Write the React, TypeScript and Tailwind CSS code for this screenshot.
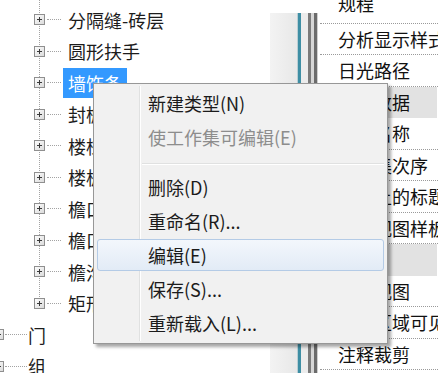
const cjk = "font-['Noto_Sans_CJK_SC','Noto_Sans',sans-serif]";

const treeItems = [
  "分隔缝-砖层",
  "圆形扶手",
  "墙饰条",
  "封檐带",
  "楼梯",
  "楼板边缘",
  "檐口",
  "檐口板",
  "檐沟",
  "矩形扶手",
];

const propRows: Array<{ label: string; header?: boolean }> = [
  { label: "规程" },
  { label: "分析显示样式" },
  { label: "日光路径" },
  { label: "标识数据", header: true },
  { label: "视图名称" },
  { label: "工作集次序" },
  { label: "图纸上的标题" },
  { label: "默认视图样板" },
  { label: "范围", header: true },
  { label: "裁剪视图" },
  { label: "裁剪区域可见" },
  { label: "注释裁剪" },
];

const menuItems: Array<{ label?: string; disabled?: boolean; hot?: boolean; sep?: boolean }> = [
  { label: "新建类型(N)" },
  { label: "使工作集可编辑(E)", disabled: true },
  { sep: true },
  { label: "删除(D)" },
  { label: "重命名(R)..." },
  { label: "编辑(E)", hot: true },
  { label: "保存(S)..." },
  { label: "重新载入(L)..." },
];

function PlusBox() {
  return (
    <svg width="11" height="11" viewBox="0 0 11 11" className="relative shrink-0">
      <defs>
        <linearGradient id="pbox" x1="0" y1="0" x2="1" y2="1">
          <stop offset="0" stopColor="#ffffff" />
          <stop offset="1" stopColor="#d9d9d9" />
        </linearGradient>
      </defs>
      <rect x="0.5" y="0.5" width="10" height="10" fill="url(#pbox)" stroke="#8f8f8f" />
      <path d="M3 5.5h5M5.5 3v5" stroke="#3a3a3a" />
    </svg>
  );
}

function Tree() {
  return (
    <div className={`relative w-[270px] shrink-0 pt-[4px] text-[18px] text-[#1c1c1c] ${cjk}`}>
      <div className="absolute left-[39px] top-0 h-[303px] border-l border-dotted border-[#a3a3a3]" />
      {treeItems.map((label, i) => (
        <div key={label} className="flex h-[31.5px] items-center">
          <div className="w-[34px] shrink-0" />
          <PlusBox />
          <div className="ml-[2px] w-[14px] shrink-0 border-t border-dotted border-[#a3a3a3]" />
          <div
            className={`ml-[2px] flex h-[30px] items-center px-[5px] leading-none whitespace-nowrap ${
              i === 2 ? "bg-[#3399ff] text-white" : ""
            }`}
          >
            {label}
          </div>
        </div>
      ))}
      {["门", "组"].map((label) => (
        <div key={label} className="flex h-[31.5px] items-center">
          <div className="ml-[-7px] shrink-0">
            <PlusBox />
          </div>
          <div className="ml-[1px] w-[22px] shrink-0 border-t border-dotted border-[#a3a3a3]" />
          <div className="ml-[1px] leading-none whitespace-nowrap">{label}</div>
        </div>
      ))}
    </div>
  );
}

function Splitter() {
  return (
    <div className="flex w-[48px] shrink-0 pt-[13px]">
      <div className="w-[27px] bg-gradient-to-r from-[#f3f3f3] to-[#e8e8e8]" />
      <div className="w-px bg-[#b9cfd5]" />
      <div className="w-[3px] bg-[#3e8ea4]" />
      <div className="w-[7px] bg-[#ececec]" />
      <div className="w-[3px] bg-[#7a7a7a]" />
      <div className="w-[3px] bg-[#d6d6d6]" />
      <div className="w-[3px] bg-[#6b6b6b]" />
      <div className="w-px bg-[#cfcfcf]" />
    </div>
  );
}

function Properties() {
  return (
    <div className={`w-[120px] shrink-0 overflow-hidden text-[18px] text-[#111] ${cjk}`}>
      <div className="mt-[-8px] flex flex-col">
        {propRows.map((row, i) =>
          row.header ? (
            <div key={row.label} className="ml-[2px] mr-px flex h-[31.5px] items-center bg-[#e2e2e2] pl-[18px] leading-none whitespace-nowrap">
              {row.label}
            </div>
          ) : (
            <div
              key={row.label}
              className="ml-[2px] flex h-[31.5px] items-center border-b border-dotted border-[#9a9a9a] pl-[18px] leading-none whitespace-nowrap"
            >
              <span className={i === 0 ? "mb-[8px]" : ""}>{row.label}</span>
            </div>
          )
        )}
      </div>
    </div>
  );
}

function ContextMenu() {
  return (
    <div
      className={`absolute left-[93px] top-[83px] h-[261px] w-[295px] border border-[#979797] bg-[#f1f1f1] px-[3px] pt-[2px] text-[18px] shadow-[3px_3px_3px_rgba(0,0,0,0.35)] ${cjk}`}
    >
      <div className="absolute bottom-[2px] left-[45px] top-[2px] w-px bg-[#e0e1e1]" />
      <div className="absolute bottom-[2px] left-[46px] top-[2px] w-px bg-white" />
      {menuItems.map((item, i) =>
        item.sep ? (
          <div key={`sep-${i}`} className="relative h-[16px] pl-[45px] pt-[9px]">
            <div className="h-px bg-[#e0e1e1]" />
            <div className="h-px bg-white" />
          </div>
        ) : (
          <div key={item.label} className="relative py-[1px]">
            <div
              className={`flex h-[32px] items-center rounded-[3px] border pl-[50px] leading-none whitespace-nowrap ${
                item.hot
                  ? "border-[#b4cbe6] bg-gradient-to-b from-[#f3f7fc] to-[#e2ebf6]"
                  : "border-transparent"
              } ${item.disabled ? "text-[#8d8d8d]" : "text-[#1b1b1b]"}`}
            >
              {item.label}
            </div>
          </div>
        )
      )}
    </div>
  );
}

export default function App() {
  return (
    <div className="relative h-[384px] w-[448px] overflow-hidden bg-white">
      <div className="flex h-[373px] overflow-hidden">
        <Tree />
        <Splitter />
        <Properties />
      </div>
      <ContextMenu />
    </div>
  );
}
